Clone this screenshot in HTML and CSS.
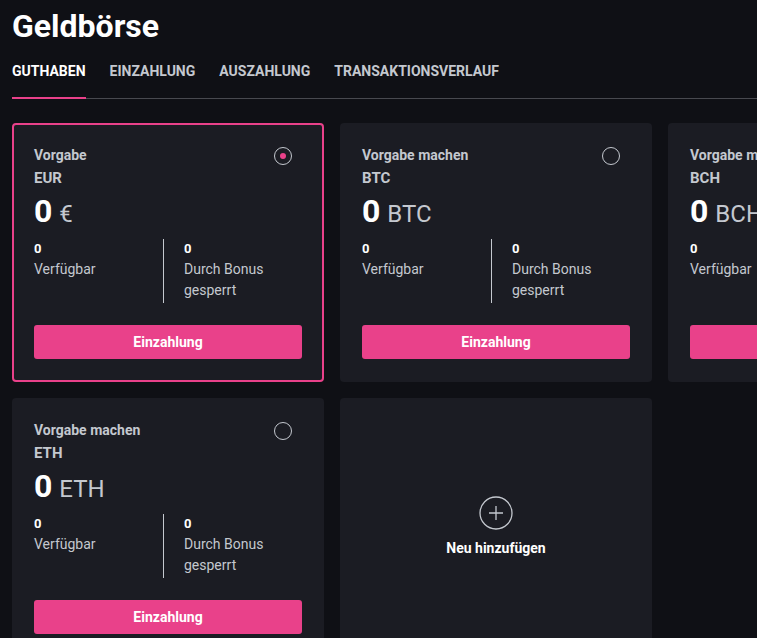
FILE: index.html
```html
<!DOCTYPE html>
<html lang="de">
<head>
  <meta charset="UTF-8">
  <meta name="viewport" content="width=device-width, initial-scale=1.0">
  <title>Geldbörse</title>
  <link rel="stylesheet" href="styles.css">
</head>
<body>
  <h1 class="page-title">Geldbörse</h1>

  <div class="tabs">
    <a class="tab active">Guthaben</a>
    <a class="tab">Einzahlung</a>
    <a class="tab">Auszahlung</a>
    <a class="tab">Transaktionsverlauf</a>
  </div>

  <div class="wallets">
    <div class="wallet selected">
      <div class="wallet-head">
        <div>
          <div class="wallet-label">Vorgabe</div>
          <div class="wallet-code">EUR</div>
        </div>
        <span class="radio checked"></span>
      </div>
      <div class="wallet-amount"><b>0</b> <span>€</span></div>
      <div class="wallet-stats">
        <div class="stat">
          <b>0</b>
          <p>Verfügbar</p>
        </div>
        <div class="stat">
          <b>0</b>
          <p>Durch Bonus gesperrt</p>
        </div>
      </div>
      <button class="deposit-btn">Einzahlung</button>
    </div>

    <div class="wallet">
      <div class="wallet-head">
        <div>
          <div class="wallet-label">Vorgabe machen</div>
          <div class="wallet-code">BTC</div>
        </div>
        <span class="radio"></span>
      </div>
      <div class="wallet-amount"><b>0</b> <span>BTC</span></div>
      <div class="wallet-stats">
        <div class="stat">
          <b>0</b>
          <p>Verfügbar</p>
        </div>
        <div class="stat">
          <b>0</b>
          <p>Durch Bonus gesperrt</p>
        </div>
      </div>
      <button class="deposit-btn">Einzahlung</button>
    </div>

    <div class="wallet">
      <div class="wallet-head">
        <div>
          <div class="wallet-label">Vorgabe machen</div>
          <div class="wallet-code">BCH</div>
        </div>
        <span class="radio"></span>
      </div>
      <div class="wallet-amount"><b>0</b> <span>BCH</span></div>
      <div class="wallet-stats">
        <div class="stat">
          <b>0</b>
          <p>Verfügbar</p>
        </div>
        <div class="stat">
          <b>0</b>
          <p>Durch Bonus gesperrt</p>
        </div>
      </div>
      <button class="deposit-btn">Einzahlung</button>
    </div>

    <div class="wallet">
      <div class="wallet-head">
        <div>
          <div class="wallet-label">Vorgabe machen</div>
          <div class="wallet-code">ETH</div>
        </div>
        <span class="radio"></span>
      </div>
      <div class="wallet-amount"><b>0</b> <span>ETH</span></div>
      <div class="wallet-stats">
        <div class="stat">
          <b>0</b>
          <p>Verfügbar</p>
        </div>
        <div class="stat">
          <b>0</b>
          <p>Durch Bonus gesperrt</p>
        </div>
      </div>
      <button class="deposit-btn">Einzahlung</button>
    </div>

    <div class="wallet add-wallet">
      <svg width="34" height="34" viewBox="0 0 34 34">
        <circle cx="17" cy="17" r="16" fill="none" stroke="#c4c8cf" stroke-width="1.3"/>
        <path d="M17 10v14M10 17h14" stroke="#c4c8cf" stroke-width="1.3"/>
      </svg>
      <span>Neu hinzufügen</span>
    </div>
  </div>
</body>
</html>
```

FILE: styles.css
```css
:root {
  --bg-color: #0f1015;
  --card-color: #1b1c23;
  --text-color: #fff;
  --muted-color: #c4c8cf;
  --line-color: #48494f;
  --primary-color: #e9418a;
}

html, body {
  overflow: hidden;
}

body {
  font-family: Roboto, "Liberation Sans", sans-serif;
  background-color: var(--bg-color);
  color: var(--text-color);
  margin: 0;
  padding: 0 0 0 12px;
  width: 1000px;
}

.page-title {
  font-size: 32px;
  font-weight: 700;
  margin: 0;
  padding-top: 8px;
  line-height: 36px;
}

.tabs {
  display: flex;
  gap: 24px;
  margin-top: 15px;
  border-bottom: 1px solid var(--line-color);
  width: 745px;
}

.tab {
  font-size: 14px;
  font-weight: 700;
  text-transform: uppercase;
  color: var(--muted-color);
  padding: 4px 0 19px;
  line-height: 16px;
  cursor: pointer;
}

.tab.active {
  color: var(--text-color);
  border-bottom: 2px solid var(--primary-color);
  margin-bottom: -1px;
  padding-bottom: 18px;
}

.wallets {
  display: grid;
  grid-template-columns: repeat(3, 312px);
  gap: 16px;
  margin-top: 24px;
}

.wallet {
  background-color: var(--card-color);
  border: 2px solid transparent;
  border-radius: 4px;
  padding: 21px 20px 20px;
  height: 259px;
  box-sizing: border-box;
  display: flex;
  flex-direction: column;
}

.wallet.selected {
  border-color: var(--primary-color);
}

.wallet-head {
  display: flex;
  justify-content: space-between;
  align-items: flex-start;
}

.wallet-label {
  font-size: 14px;
  font-weight: 700;
  color: var(--muted-color);
  line-height: 18px;
}

.wallet-code {
  font-size: 15px;
  font-weight: 700;
  color: var(--muted-color);
  line-height: 18px;
  margin-top: 5px;
}

.radio {
  width: 16px;
  height: 16px;
  border: 1.3px solid var(--muted-color);
  border-radius: 50%;
  margin: 1px 10px 0 0;
  display: flex;
  align-items: center;
  justify-content: center;
}

.radio.checked::after {
  content: "";
  width: 6px;
  height: 6px;
  border-radius: 50%;
  background-color: var(--primary-color);
}

.wallet-amount {
  margin-top: 6px;
  line-height: 36px;
}

.wallet-amount b {
  font-size: 32px;
}

.wallet-amount span {
  font-size: 24px;
  color: var(--muted-color);
  margin-left: 3px;
}

.wallet-stats {
  display: flex;
  margin-top: 4px;
}

.stat {
  width: 129px;
  padding: 2px 0;
}

.stat + .stat {
  border-left: 1px solid var(--muted-color);
  padding-left: 20px;
  width: 110px;
}

.stat b {
  display: block;
  font-size: 13px;
  line-height: 16px;
}

.stat p {
  margin: 2px 0 0;
  font-size: 14px;
  line-height: 21px;
  color: var(--muted-color);
}

.deposit-btn {
  margin-top: auto;
  margin-bottom: 1px;
  background-color: var(--primary-color);
  color: #fff;
  border: none;
  border-radius: 3px;
  height: 34px;
  font-family: inherit;
  font-size: 14px;
  font-weight: 700;
  cursor: pointer;
}

.add-wallet {
  align-items: center;
  justify-content: center;
  gap: 10px;
  padding-bottom: 25px;
}

.add-wallet span {
  font-size: 14px;
  font-weight: 700;
}
```
